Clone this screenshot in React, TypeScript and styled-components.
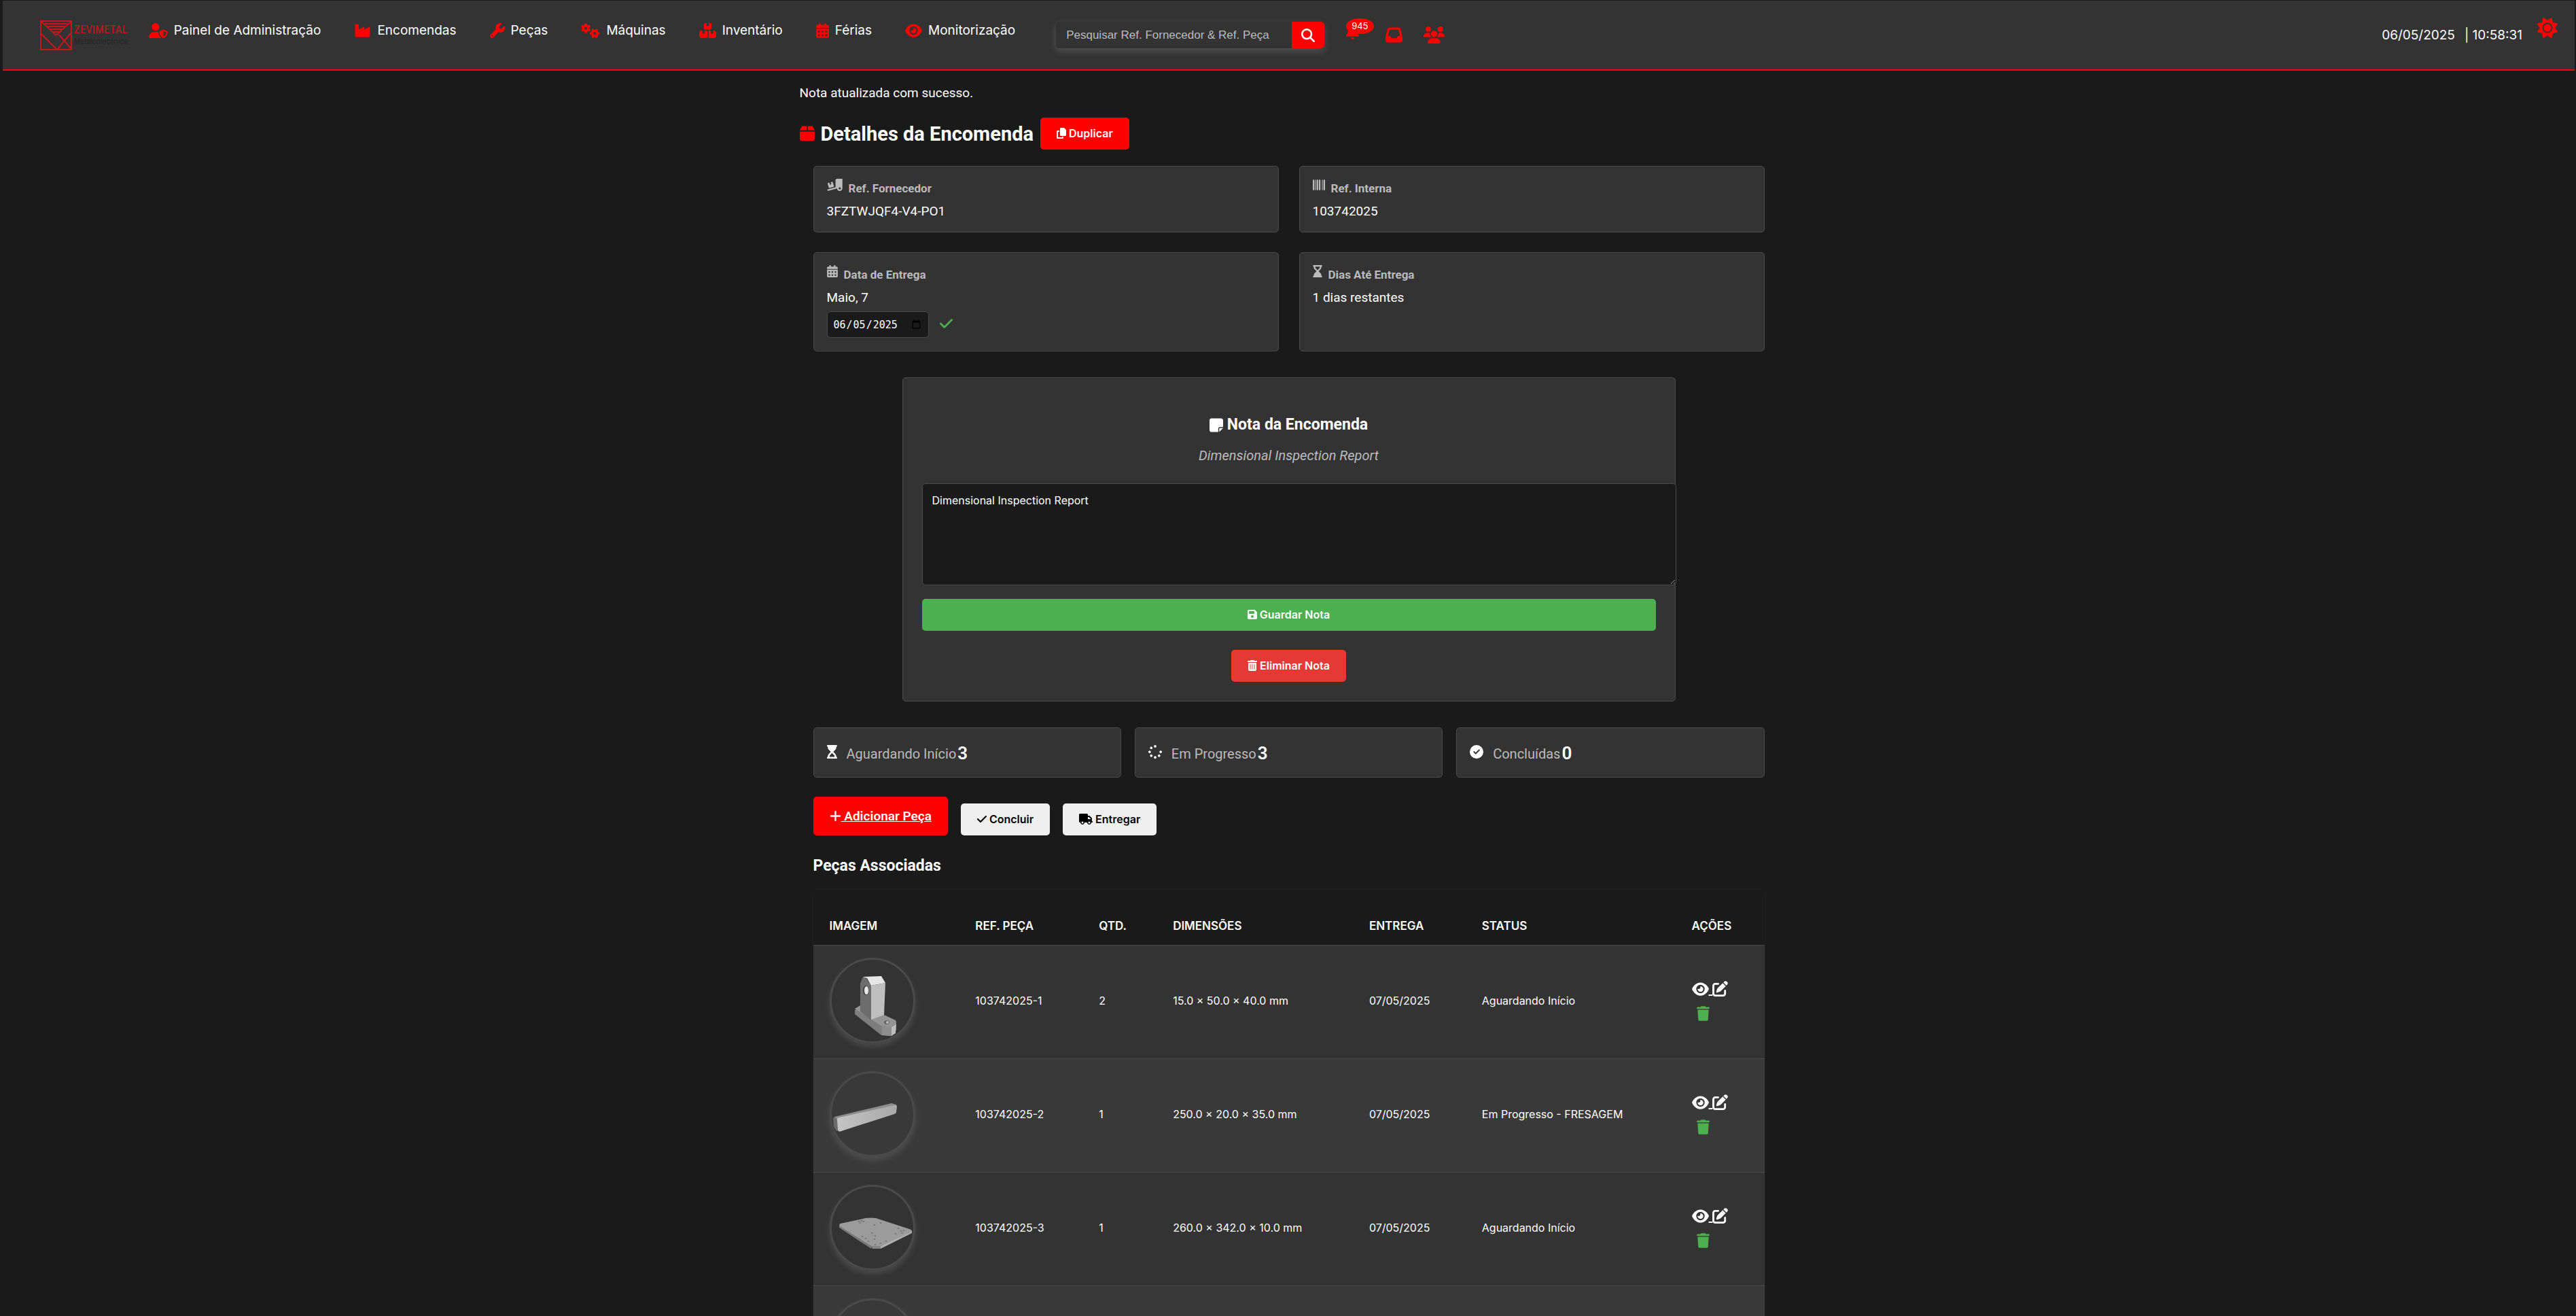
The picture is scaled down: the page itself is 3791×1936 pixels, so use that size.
import React, { useState } from 'react';
import styled, { createGlobalStyle } from 'styled-components';
import {
  FaUserShield, FaIndustry, FaWrench, FaGears, FaBoxesStacked, FaCalendarDays, FaEye,
  FaMagnifyingGlass, FaBell, FaInbox, FaUsers, FaSun, FaBox, FaCopy, FaTruckRampBox,
  FaBarcode, FaHourglassEnd, FaHourglassStart, FaCheck, FaNoteSticky, FaFloppyDisk,
  FaTrashCan, FaTrash, FaSpinner, FaCircleCheck, FaPlus, FaTruck, FaPenToSquare,
} from 'react-icons/fa6';

const inter = `Inter, "Liberation Sans", sans-serif`;
const roboto = `Roboto, "Liberation Sans", sans-serif`;

const GlobalStyle = createGlobalStyle`
  *, *::before, *::after { box-sizing: border-box; }
  body {
    margin: 0;
    background: #1a1a1a;
    color: #fff;
    font-family: ${roboto};
    font-size: 18px;
    overflow-x: hidden;
  }
  h1, h2, h3, p { margin: 0; }
`;

/* $units is the glyph's own width on the 512-unit-high icon grid. */
const Icon = styled.span<{ $size: number; $units?: number; $color?: string }>`
  display: inline-flex;
  flex: none;
  color: ${p => p.$color || 'inherit'};
  svg {
    display: block;
    height: ${p => p.$size}px;
    width: ${p => Math.round((p.$size * (p.$units || 512)) / 512)}px;
  }
`;

/* ---------- header ---------- */

const Header = styled.header`
  display: flex;
  align-items: center;
  min-height: 103px;
  padding: 0 25px 0 55px;
  background: #333;
  border-bottom: 2px solid #f00;
`;

const Logo = styled.a`
  display: flex;
  align-items: center;
  gap: 3px;
  margin-right: 31px;
  color: #c4161c;
  text-decoration: none;
`;

const LogoText = styled.span`
  display: flex;
  flex-direction: column;
  font-family: "Liberation Sans Narrow", "Roboto Condensed", "DejaVu Sans Condensed", sans-serif;
  font-size: 17px;
  line-height: 18px;
`;

const LogoSub = styled.span`
  font-size: 12px;
  color: #262626;
`;

const Nav = styled.nav`
  display: flex;
  gap: 49px;
  padding-bottom: 14px;
`;

const NavLink = styled.a`
  display: flex;
  align-items: center;
  gap: 9px;
  font-family: ${inter};
  font-size: 19px;
  line-height: 28px;
  color: #fff;
  text-decoration: none;
  white-space: nowrap;
`;

const Search = styled.form`
  display: flex;
  width: 395px;
  height: 39px;
  margin-left: 60px;
  border-radius: 5px;
  overflow: hidden;
  box-shadow: 0 4px 12px rgba(255, 255, 255, 0.16);
`;

const SearchInput = styled.input`
  flex: 1;
  min-width: 0;
  padding: 0 15px;
  border: 0;
  outline: 0;
  background: #333;
  color: #fff;
  font-family: "Liberation Sans", Arial, sans-serif;
  font-size: 17px;
  &::placeholder { color: #bbb; opacity: 1; }
`;

const SearchButton = styled.button`
  display: flex;
  align-items: center;
  justify-content: center;
  width: 48px;
  padding: 0;
  border: 0;
  background: #f00;
  color: #fff;
`;

const HeaderTools = styled.div`
  display: flex;
  align-items: center;
  gap: 31px;
  margin-left: 32px;
`;

const ToolLink = styled.a`
  position: relative;
  display: flex;
  color: #f00;
`;

const BellLink = styled(ToolLink)`
  width: 27px;
  padding-bottom: 10px;
`;

const Badge = styled.span`
  position: absolute;
  left: 0;
  top: -9px;
  padding: 0 8px;
  border-radius: 50%;
  background: #f00;
  color: #fff;
  font-family: ${inter};
  font-size: 13px;
  line-height: 23px;
`;

const Clock = styled.div`
  display: flex;
  gap: 14px;
  margin-left: auto;
  font-family: ${inter};
  font-size: 19px;
  line-height: 24px;
  white-space: nowrap;
`;

const ThemeButton = styled.button`
  margin: 0 0 18px 22px;
  padding: 0;
  border: 0;
  background: none;
  color: #f00;
`;

/* ---------- page ---------- */

const Main = styled.main`
  max-width: 1440px;
  margin: 0 auto;
  padding-top: 21px;
`;

const Message = styled.p`
  font-size: 19px;
  line-height: 24px;
`;

const TitleRow = styled.div`
  display: flex;
  align-items: center;
  gap: 10px;
  margin: 24px 0;
`;

const Title = styled.h1`
  display: flex;
  align-items: center;
  gap: 9px;
  font-size: 29px;
  line-height: 40px;
`;

const Button = styled.button<{ $bg: string; $fg?: string; $block?: boolean }>`
  display: flex;
  align-items: center;
  justify-content: center;
  gap: 4px;
  width: ${p => (p.$block ? '100%' : 'auto')};
  height: 47px;
  padding: 0 24px 2px;
  border: 0;
  border-radius: 5px;
  background: ${p => p.$bg};
  color: ${p => p.$fg || '#fff'};
  font-family: ${inter};
  font-size: 16px;
  font-weight: 600;
  white-space: nowrap;
`;

const Content = styled.div`
  padding: 0 20px;
`;

const InfoGrid = styled.section`
  display: grid;
  grid-template-columns: 1fr 1fr;
  gap: 29px 30px;
`;

const panel = `
  background: #333;
  border: 1px solid #4a4a4a;
  border-radius: 5px;
`;

const InfoCard = styled.article`
  ${panel}
  padding: 15px 19px 13px;
`;

const InfoLabel = styled.h2`
  display: flex;
  align-items: center;
  gap: 9px;
  color: #bbb;
  font-size: 17px;
  line-height: 34px;
  ${Icon} { margin-bottom: 10px; }
`;

const InfoValue = styled.p`
  font-size: 19px;
  line-height: 34px;
`;

const IconButton = styled.button`
  display: inline-flex;
  padding: 0;
  border: 0;
  background: none;
  color: #4caf50;
`;

const DateForm = styled.form`
  display: flex;
  align-items: center;
  gap: 16px;
  padding: 3px 0 6px;
  ${IconButton} { margin-bottom: 4px; }
`;

const DateInput = styled.input`
  width: 150px;
  height: 39px;
  padding: 0 8px;
  border: 1px solid #4a4a4a;
  border-radius: 5px;
  background: #1a1a1a;
  color: #fff;
  font-family: "DejaVu Sans Mono", "Liberation Mono", monospace;
  font-size: 15px;
`;

const NoteCard = styled.section`
  ${panel}
  max-width: 1138px;
  margin: 38px auto;
  padding: 53px 28px 28px;
  display: flex;
  flex-direction: column;
  align-items: center;
`;

const NoteTitle = styled.h2`
  display: flex;
  align-items: center;
  gap: 6px;
  font-size: 23px;
  line-height: 32px;
`;

const NoteText = styled.p`
  margin: 14px 0 26px;
  color: #bbb;
  font-size: 20px;
  font-style: italic;
  line-height: 30px;
`;

const NoteArea = styled.textarea`
  box-sizing: content-box;
  align-self: flex-start;
  width: 100%;
  height: 120px;
  margin-bottom: 20px;
  padding: 14px;
  border: 1px solid #4a4a4a;
  border-radius: 5px;
  outline: 0;
  background: #1a1a1a;
  color: #fff;
  font-family: ${inter};
  font-size: 16px;
  line-height: 20px;
  resize: vertical;
`;

const NoteActions = styled.div`
  display: flex;
  flex-direction: column;
  align-items: center;
  gap: 28px;
  width: 100%;
`;

const StatGrid = styled.section`
  display: grid;
  grid-template-columns: repeat(3, 1fr);
  gap: 20px;
`;

const StatCard = styled.article`
  ${panel}
  display: flex;
  align-items: center;
  min-height: 74px;
  padding: 3px 19px 0;
  color: #bbb;
  font-size: 20px;
  ${Icon} { margin: 0 14px 6px 0; }
`;

const StatNumber = styled.strong`
  margin-left: 2px;
  padding-bottom: 2px;
  color: #fff;
  font-size: 26px;
  font-weight: 600;
  line-height: 28px;
`;

const Actions = styled.section`
  display: flex;
  align-items: flex-end;
  gap: 19px;
  margin: 28px 0;
`;

const AddLink = styled.a`
  display: flex;
  align-items: center;
  height: 57px;
  padding: 0 24px;
  border-radius: 5px;
  background: #f00;
  color: #fff;
  font-size: 19px;
  font-weight: 600;
  white-space: pre;
`;

const SectionTitle = styled.h2`
  font-size: 23px;
  line-height: 34px;
`;

const TableWrap = styled.section`
  margin-top: 18px;
  padding-top: 25px;
  border-radius: 5px 5px 0 0;
  box-shadow: 0 0 3px rgba(255, 255, 255, 0.06);
`;

const Table = styled.table`
  width: 100%;
  border-collapse: collapse;
  table-layout: fixed;
  font-family: ${inter};
  font-size: 16px;
`;

const HeadCell = styled.th`
  height: 56px;
  padding: 0 0 0 24px;
  border-bottom: 1px solid #4a4a4a;
  text-align: left;
  font-size: 17px;
  font-weight: 600;
  text-transform: uppercase;
`;

const Row = styled.tr`
  height: 167px;
  background: #333;
  &:nth-child(even) { background: #393939; }
`;

const Cell = styled.td`
  padding: 0 0 3px 24px;
  border-bottom: 1px solid #4a4a4a;
  vertical-align: middle;
`;

const Thumb = styled.div`
  width: 126px;
  height: 126px;
  border: 3px solid #4a4a4a;
  border-radius: 50%;
  overflow: hidden;
  box-shadow: 0 5px 10px rgba(255, 255, 255, 0.12);
  svg { display: block; width: 120px; height: 120px; }
`;

const RowActions = styled.div`
  display: flex;
  flex-direction: column;
  align-items: flex-start;
  gap: 14px;
  color: #fff;
  ${IconButton} { margin-left: 7px; }
`;

const RowLinks = styled.div`
  display: flex;
  align-items: flex-end;
`;

const RowLink = styled.a`
  display: flex;
  align-items: flex-end;
  color: #fff;
  font-size: 20px;
  line-height: 22px;
`;

/* ---------- drawings ---------- */

const LogoMark = () => (
  <svg width="47" height="44" viewBox="0 0 47 44" fill="none" stroke="#c4161c" strokeWidth="2">
    <rect x="1" y="1" width="45" height="42" />
    <path d="M2 2 L23.500 22 L45 2 M7 5 H40 M11 9 H36 M15 13 H32 M19 17 H28" />
    <path d="M2 20 L25 43 M45 19 L25 43 M28 21 L46 42" />
  </svg>
);

const BracketPart = () => (
  <svg viewBox="0 0 120 120">
    <path d="M34 74 L44 66 L95 90 L95 103 L87 112 L73 111 L34 80Z" fill="#7d7d7d" />
    <path d="M34 72 L42 67 L58 84 L77 81 L94 89 L95 95 L88 99 L74 98Z" fill="#949494" />
    <path d="M74 99 L88 99 L88 112 L74 111Z" fill="#8d8d8d" />
    <path d="M88 99 L95 95 L94 108 L88 112Z" fill="#bdbdbd" />
    <path d="M42 35 L46 25 L50 26 L58 38 L58 89 L42 76Z" fill="#6d6d6d" />
    <path d="M46 25 L73 24 L79 34 L58 38 L52 27Z" fill="#e6e6e6" />
    <path d="M58 38 L79 34 L77 81 L58 88Z" fill="#bfbfbf" />
    <ellipse cx="50" cy="45" rx="4" ry="7" fill="#444" />
    <ellipse cx="51" cy="45" rx="3" ry="6" fill="#e8e8e8" />
    <ellipse cx="81" cy="92" rx="4" ry="3" fill="#666" />
    <ellipse cx="82" cy="92" rx="2" ry="2" fill="#bbb" />
  </svg>
);

const BarPart = () => (
  <svg viewBox="0 0 120 120">
    <defs>
      <linearGradient id="bar" x1="0" x2="1"><stop offset="0" stopColor="#c4c4c4" /><stop offset="1" stopColor="#a8a8a8" /></linearGradient>
    </defs>
    <path d="M2 66 L5 64 L8 68 L10 84 L7 85 L3 78Z" fill="#6c6c6c" />
    <path d="M4 64 L88 44 L95 46 L94 50 L8 68Z" fill="#8d8d8d" />
    <path d="M8 69 Q7 66 11 65 L92 47 Q96 46 96 49 L95 57 Q95 59 92 60 L14 85 Q10 87 9 83Z" fill="url(#bar)" />
  </svg>
);

const plateHoles = [
  [40, 51], [44, 50], [47, 51], [42, 53], [63, 56], [72, 53], [98, 61], [102, 65], [106, 64],
  [104, 68], [94, 69], [59, 68], [64, 72], [45, 73], [50, 76], [54, 80], [63, 77], [64, 85], [72, 83], [80, 80],
];

const PlatePart = () => (
  <svg viewBox="0 0 120 120">
    <path d="M11 56 L58 87 L58 91 L11 60Z" fill="#777" />
    <path d="M58 87 L72 87 L118 64 L118 68 L72 91 L60 91Z" fill="#aeaeae" />
    <path d="M58 87 L72 87 L72 91 L60 91Z" fill="#858585" />
    <path d="M13 54 L50 46 Q58 45 65 46 L114 62 Q120 64 116 67 L72 87 L58 87 L12 58 Q10 55 13 54Z" fill="#9b9b9b" />
    {plateHoles.map(([x, y]) => <ellipse key={`${x}-${y}`} cx={x} cy={y} rx="1.400" ry="1" fill="#757575" />)}
  </svg>
);

/* ---------- data ---------- */

const navItems = [
  { label: 'Painel de Administração', icon: <FaUserShield />, units: 640 },
  { label: 'Encomendas', icon: <FaIndustry />, units: 576 },
  { label: 'Peças', icon: <FaWrench />, units: 512 },
  { label: 'Máquinas', icon: <FaGears />, units: 640 },
  { label: 'Inventário', icon: <FaBoxesStacked />, units: 576 },
  { label: 'Férias', icon: <FaCalendarDays />, units: 448 },
  { label: 'Monitorização', icon: <FaEye />, units: 576 },
];

const stats = [
  { label: 'Aguardando Início', value: 3, icon: <FaHourglassStart />, units: 384 },
  { label: 'Em Progresso', value: 3, icon: <FaSpinner />, units: 512 },
  { label: 'Concluídas', value: 0, icon: <FaCircleCheck />, units: 512 },
];

const columns = [
  { label: 'Imagem', width: 215 },
  { label: 'Ref. Peça', width: 182 },
  { label: 'Qtd.', width: 109 },
  { label: 'Dimensões', width: 289 },
  { label: 'Entrega', width: 166 },
  { label: 'Status', width: 309 },
  { label: 'Ações', width: 131 },
];

const parts = [
  { ref: '103742025-1', qty: 2, size: '15.0 × 50.0 × 40.0 mm', date: '07/05/2025', status: 'Aguardando Início', image: <BracketPart /> },
  { ref: '103742025-2', qty: 1, size: '250.0 × 20.0 × 35.0 mm', date: '07/05/2025', status: 'Em Progresso - FRESAGEM', image: <BarPart /> },
  { ref: '103742025-3', qty: 1, size: '260.0 × 342.0 × 10.0 mm', date: '07/05/2025', status: 'Aguardando Início', image: <PlatePart /> },
];

const Page = styled.div`
  height: 100vh;
  padding: 1px 2px 0 4px;
  overflow: hidden;
`;

export default function App() {
  const [date, setDate] = useState('2025-06-05');
  const [note, setNote] = useState('Dimensional Inspection Report');

  return (
    <Page>
      <GlobalStyle />
      <Header>
        <Logo href="#">
          <LogoMark />
          <LogoText>ZEVIMETAL<LogoSub>Metalomecânica</LogoSub></LogoText>
        </Logo>
        <Nav>
          {navItems.map(item => (
            <NavLink key={item.label} href="#">
              <Icon $size={22} $units={item.units} $color="#f00">{item.icon}</Icon>
              {item.label}
            </NavLink>
          ))}
        </Nav>
        <Search onSubmit={e => e.preventDefault()}>
          <SearchInput type="text" aria-label="Pesquisar" placeholder="Pesquisar Ref. Fornecedor & Ref. Peça" />
          <SearchButton type="submit" aria-label="Procurar"><Icon $size={20}><FaMagnifyingGlass /></Icon></SearchButton>
        </Search>
        <HeaderTools>
          <BellLink href="#" aria-label="Notificações"><Icon $size={22} $units={448}><FaBell /></Icon><Badge>945</Badge></BellLink>
          <ToolLink href="#" aria-label="Caixa de entrada"><Icon $size={25}><FaInbox /></Icon></ToolLink>
          <ToolLink href="#" aria-label="Utilizadores"><Icon $size={25} $units={640}><FaUsers /></Icon></ToolLink>
        </HeaderTools>
        <Clock><span>06/05/2025</span><span>| 10:58:31</span></Clock>
        <ThemeButton aria-label="Mudar tema"><Icon $size={30}><FaSun /></Icon></ThemeButton>
      </Header>

      <Main>
        <Message>Nota atualizada com sucesso.</Message>
        <TitleRow>
          <Title><Icon $size={25} $units={448} $color="#f00"><FaBox /></Icon>Detalhes da Encomenda</Title>
          <Button $bg="#f00"><Icon $size={16} $units={448}><FaCopy /></Icon>Duplicar</Button>
        </TitleRow>

        <Content>
          <InfoGrid>
            <InfoCard>
              <InfoLabel><Icon $size={18} $units={640}><FaTruckRampBox /></Icon>Ref. Fornecedor</InfoLabel>
              <InfoValue>3FZTWJQF4-V4-PO1</InfoValue>
            </InfoCard>
            <InfoCard>
              <InfoLabel><Icon $size={18}><FaBarcode /></Icon>Ref. Interna</InfoLabel>
              <InfoValue>103742025</InfoValue>
            </InfoCard>
            <InfoCard>
              <InfoLabel><Icon $size={18} $units={448}><FaCalendarDays /></Icon>Data de Entrega</InfoLabel>
              <InfoValue>Maio, 7</InfoValue>
              <DateForm onSubmit={e => e.preventDefault()}>
                <DateInput type="date" aria-label="Data de Entrega" value={date} onChange={e => setDate(e.target.value)} />
                <IconButton aria-label="Confirmar data"><Icon $size={22} $units={448}><FaCheck /></Icon></IconButton>
              </DateForm>
            </InfoCard>
            <InfoCard>
              <InfoLabel><Icon $size={18} $units={384}><FaHourglassEnd /></Icon>Dias Até Entrega</InfoLabel>
              <InfoValue>1 dias restantes</InfoValue>
            </InfoCard>
          </InfoGrid>

          <NoteCard>
            <NoteTitle><Icon $size={23} $units={448}><FaNoteSticky /></Icon>Nota da Encomenda</NoteTitle>
            <NoteText>Dimensional Inspection Report</NoteText>
            <NoteArea aria-label="Nota" value={note} onChange={e => setNote(e.target.value)} />
            <NoteActions>
              <Button $bg="#4caf50" $block><Icon $size={16} $units={448}><FaFloppyDisk /></Icon>Guardar Nota</Button>
              <Button $bg="#e53935"><Icon $size={16} $units={448}><FaTrashCan /></Icon>Eliminar Nota</Button>
            </NoteActions>
          </NoteCard>

          <StatGrid>
            {stats.map(s => (
              <StatCard key={s.label}>
                <Icon $size={20} $units={s.units} $color="#fff">{s.icon}</Icon>
                {s.label}
                <StatNumber>{s.value}</StatNumber>
              </StatCard>
            ))}
          </StatGrid>

          <Actions>
            <AddLink href="#"><Icon $size={19} $units={448}><FaPlus /></Icon> Adicionar Peça</AddLink>
            <Button $bg="#efefef" $fg="#000"><Icon $size={16} $units={448}><FaCheck /></Icon>Concluir</Button>
            <Button $bg="#efefef" $fg="#000"><Icon $size={16} $units={640}><FaTruck /></Icon>Entregar</Button>
          </Actions>

          <SectionTitle>Peças Associadas</SectionTitle>
          <TableWrap>
            <Table>
              <colgroup>
                {columns.map(c => <col key={c.label} style={{ width: `${c.width / 14.01}%` }} />)}
              </colgroup>
              <thead>
                <tr>{columns.map(c => <HeadCell key={c.label} scope="col">{c.label}</HeadCell>)}</tr>
              </thead>
              <tbody>
                {parts.map(p => (
                  <Row key={p.ref}>
                    <Cell><Thumb>{p.image}</Thumb></Cell>
                    <Cell>{p.ref}</Cell>
                    <Cell>{p.qty}</Cell>
                    <Cell>{p.size}</Cell>
                    <Cell>{p.date}</Cell>
                    <Cell>{p.status}</Cell>
                    <Cell>
                      <RowActions>
                        <RowLinks>
                          <RowLink href="#" aria-label={`Ver ${p.ref}`}><Icon $size={22} $units={576}><FaEye /></Icon>{'\u00a0'}</RowLink>
                          <RowLink href="#" aria-label={`Editar ${p.ref}`}><Icon $size={23}><FaPenToSquare /></Icon></RowLink>
                        </RowLinks>
                        <IconButton aria-label={`Eliminar ${p.ref}`}><Icon $size={22} $units={448}><FaTrash /></Icon></IconButton>
                      </RowActions>
                    </Cell>
                  </Row>
                ))}
                <Row>
                  <Cell><Thumb /></Cell>
                  <Cell /><Cell /><Cell /><Cell /><Cell /><Cell />
                </Row>
              </tbody>
            </Table>
          </TableWrap>
        </Content>
      </Main>
    </Page>
  );
}
